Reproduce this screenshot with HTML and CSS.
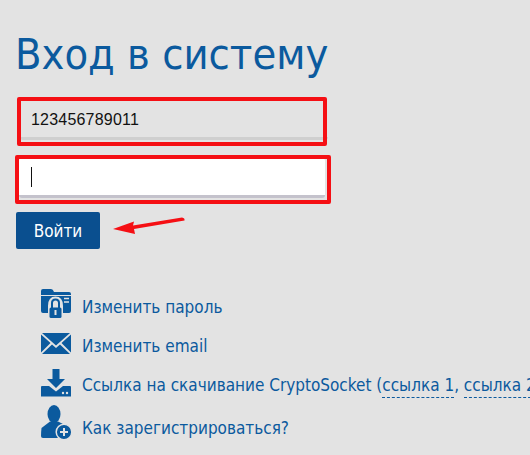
FILE: index.html
```html
<!DOCTYPE html>
<html lang="ru">
<head>
<meta charset="utf-8">
<title>Вход в систему</title>
<link rel="stylesheet" href="styles.css">
</head>
<body>
<main class="page">
  <h1 class="title">Вход в систему</h1>
  <form class="form">
    <div class="field field-filled"><span>123456789011</span></div>
    <div class="field field-focus"><span class="caret"></span></div>
    <button type="button" class="submit">Войти</button>
  </form>
  <ul class="links">
    <li class="link-row row-1">
      <svg class="icon" viewBox="0 3 30 30"><path d="M0 2Q0 0 2 0H10Q12 0 13 3H28Q30 3 30 5V6H0Z M0 7H30V22Q30 24 28 24H22V17Q22 7.500 14.500 7.500Q7 7.500 7 17V24H2Q0 24 0 22Z" fill="#0b5a9e"/><path d="M23 9.500H28M23 13H28" stroke="#e3e3e3" stroke-width="1.500"/><path d="M11 19V14Q11 10.500 14.500 10.500Q18 10.500 18 14V19" fill="none" stroke="#0b5a9e" stroke-width="2"/><rect x="8.500" y="18.500" width="12" height="10.500" rx="1.500" fill="#0b5a9e"/><rect x="13.500" y="21" width="2" height="5" fill="#e3e3e3"/></svg>
      <a class="link">Изменить пароль</a>
    </li>
    <li class="link-row row-2">
      <svg class="icon" viewBox="0 2 30 30"><path d="M1 4H29L15 16.500Z M0 5.500L9.500 14L0 23.500Z M30 5.500L20.500 14L30 23.500Z M1 25L11 15.500L15 19L19 15.500L29 25Z" fill="#0b5a9e"/></svg>
      <a class="link">Изменить email</a>
    </li>
    <li class="link-row row-3">
      <svg class="icon" viewBox="0 2 30 30"><path d="M11.500 1H18.500V11H24L15 20L6 11H11.500Z" fill="#0b5a9e"/><path d="M1 18H8L15 23.500L22 18H29Q30 18 30 19V28.500H0V19Q0 18 1 18Z" fill="#0b5a9e"/><circle cx="22" cy="25" r="1.200" fill="#e3e3e3"/><circle cx="26" cy="25" r="1.200" fill="#e3e3e3"/></svg>
      <span class="link">Ссылка на скачивание CryptoSocket (<a class="dashed">ссылка 1</a>, <a class="dashed">ссылка 2</a>)</span>
    </li>
    <li class="link-row row-4">
      <svg class="icon icon-user" viewBox="0 0 30 35"><ellipse cx="13" cy="9" rx="6.500" ry="9" fill="#0b5a9e"/><path d="M9 16.500L0.500 23Q0 27 0 31Q0 33 2 33H20L24 20L17 16.500Z" fill="#0b5a9e"/><circle cx="23" cy="27" r="7.800" fill="#0b5a9e" stroke="#e3e3e3" stroke-width="1.500"/><path d="M23 23V31M19 27H27" stroke="#e3e3e3" stroke-width="2"/></svg>
      <a class="link link-low">Как зарегистрироваться?</a>
    </li>
  </ul>
  <div class="mark mark-1"></div>
  <div class="mark mark-2"></div>
  <svg class="arrow" viewBox="0 0 72 18"><path d="M0 12L21 4.500L20 8.500L69 0.500Q72 1 71.500 3.500L21 12L22 17Z" fill="#f50f14"/></svg>
</main>
</body>
</html>
```
FILE: styles.css
```css
* {
  box-sizing: border-box;
}

html, body {
  margin: 0;
  height: 100%;
  overflow: hidden;
  background: #e3e3e3;
}

.page {
  position: relative;
  width: 530px;
  height: 455px;
  padding: 29px 0 0 16px;
  font-family: "DejaVu Sans Condensed", "DejaVu Sans", sans-serif;
  overflow: hidden;
}

.title {
  margin: 0 0 0 -1px;
  height: 71px;
  font-size: 43px;
  line-height: 50px;
  font-weight: 400;
  color: #0b5a9e;
  white-space: nowrap;
}

.form {
  display: flex;
  flex-direction: column;
  align-items: flex-start;
}

.field {
  display: flex;
  align-items: center;
  height: 40px;
  width: 308px;
  margin-left: 4px;
  padding-left: 11px;
  padding-top: 3px;
  border-radius: 3px;
  background: #e3e3e3;
  border-bottom: 3px solid #cfcfcf;
  font-family: "Liberation Sans", Arial, sans-serif;
  font-size: 16px;
  letter-spacing: 0.2px;
  color: #111;
}

.field-focus {
  width: 306px;
  margin-left: 3px;
  margin-top: 18px;
  padding-left: 12px;
  padding-top: 1px;
  background: #fff;
  border-bottom-color: #c4c2cc;
}

.caret {
  display: block;
  width: 1px;
  height: 20px;
  background: #111;
}

.submit {
  width: 84px;
  height: 37px;
  margin-top: 14px;
  border: 0;
  border-radius: 2px;
  background: #0a4f8f;
  color: #fff;
  font-family: inherit;
  font-size: 17px;
  padding: 0;
}

.links {
  list-style: none;
  margin: 0;
  padding: 0 0 0 25px;
}

.link-row {
  display: flex;
  align-items: center;
  gap: 11px;
  height: 30px;
  white-space: nowrap;
  font-size: 17px;
  color: #0b5a9e;
}

.row-1 { margin-top: 43px; }
.row-2 { margin-top: 9px; }
.row-3 { margin-top: 9px; }
.row-4 { margin-top: 5px; height: 35px; }

.icon {
  flex: none;
  width: 30px;
  height: 30px;
  overflow: visible;
}

.icon-user {
  height: 35px;
}

.link-low {
  align-self: flex-end;
  margin-bottom: 2px;
}

.dashed {
  border-bottom: 1px dashed #0b5a9e;
  padding-bottom: 2px;
}

.mark {
  position: absolute;
  border: 4px solid #f50f14;
  border-radius: 2px;
}

.mark-1 {
  left: 17px;
  top: 97px;
  width: 310px;
  height: 49px;
}

.mark-2 {
  left: 15px;
  top: 155px;
  width: 316px;
  height: 49px;
}

.arrow {
  position: absolute;
  left: 113px;
  top: 217px;
  width: 72px;
  height: 18px;
}
```
